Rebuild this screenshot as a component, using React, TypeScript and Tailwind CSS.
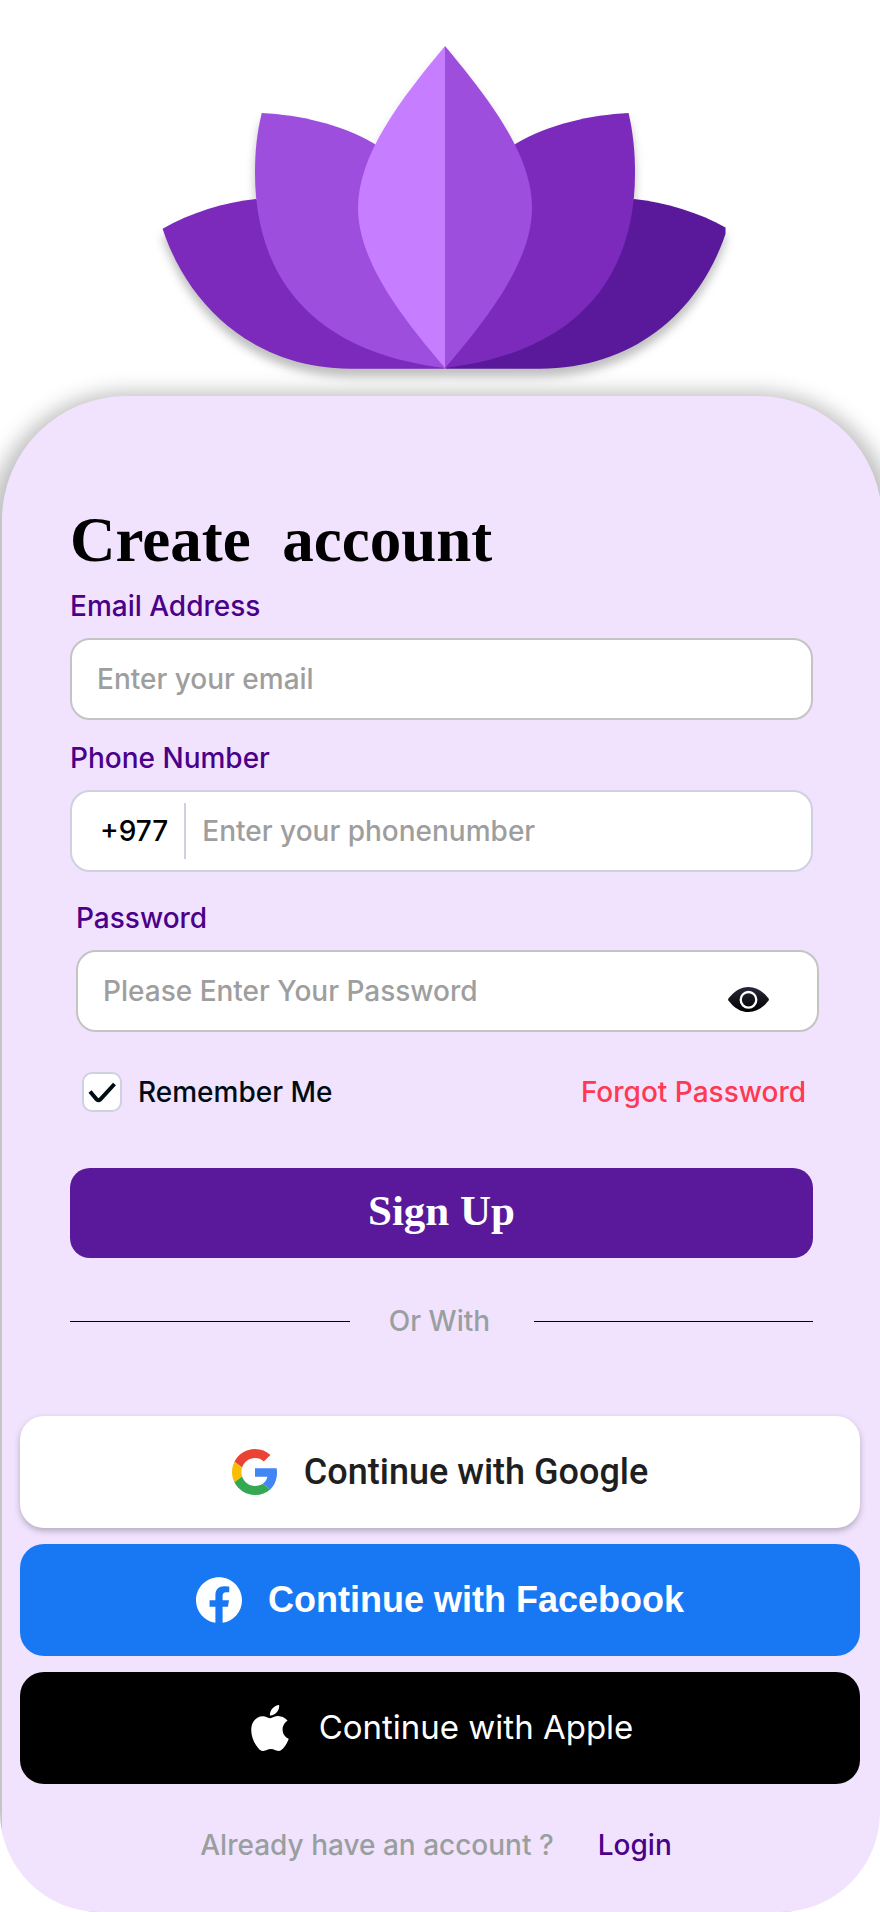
import { useState } from "react";
import type { ReactNode } from "react";

const sans = "font-['Inter','Liberation_Sans',sans-serif]";
const labelText = "text-[28px] leading-10 font-medium";
const fieldBox = "flex h-[82px] items-center rounded-[20px] border-2 bg-white";
const fieldInput =
  "h-full min-w-0 flex-1 bg-transparent text-[28px] font-medium text-black outline-none placeholder:text-[#9e9e9e]";

function Lotus() {
  return (
    <svg
      viewBox="162 46 564 324"
      className="h-auto w-[564px] overflow-visible drop-shadow-[0_8px_5px_rgba(0,0,0,0.25)]"
      role="img"
      aria-label="Lotus"
    >
      <path
        fill="#7b2abc"
        d="M162.6 228.7C190 213 225 202 256 199L330 260L445 368.7H350C260 368.7 190 312 162.6 228.7Z"
      />
      <path
        fill="#5a189a"
        d="M725.5 227.5C700 213 665 202 634 199L560 260L445 368.7H540C630 368.7 698 315 725.5 234Z"
      />
      <path
        fill="#9d4edd"
        d="M261.7 113C300 115 340 124 373 143L445 190V368C310 352 255 275 255 173C255 150 257 133 261.7 113Z"
      />
      <path
        fill="#7b2abc"
        d="M628.6 113C590 115 550 124 517 143L445 190V368C580 352 635 275 635 173C635 150 633 133 628.6 113Z"
      />
      <path fill="#c77dff" d="M445 46C400 100 358 155 358 208C358 262 404 320 445 368Z" />
      <path fill="#9d4edd" d="M445 46C490 100 532 155 532 208C532 262 486 320 445 368Z" />
    </svg>
  );
}

function EyeIcon() {
  return (
    <svg viewBox="0 0 41 25" className="h-[25px] w-[41px]" aria-hidden="true">
      <defs>
        <linearGradient id="eye-fill" x1="0" y1="0" x2="0" y2="1">
          <stop offset="0" stopColor="#292839" />
          <stop offset="1" stopColor="#000000" />
        </linearGradient>
      </defs>
      <path
        fill="url(#eye-fill)"
        d="M0.4 11.6C6 4.2 12.6 0 20.5 0S35 4.2 40.6 11.6Q41.2 12.5 40.6 13.4C35 20.8 28.4 25 20.5 25S6 20.8 0.4 13.4Q-0.2 12.5 0.4 11.6Z"
      />
      <circle cx="20.5" cy="12.8" r="7.8" fill="none" stroke="#fff" strokeWidth="2.3" />
    </svg>
  );
}

function GoogleIcon() {
  return (
    <svg viewBox="0 0 48 48" className="size-[46px]" aria-hidden="true">
      <path fill="#EA4335" d="M24 9.5c3.54 0 6.71 1.22 9.21 3.6l6.85-6.85C35.9 2.38 30.47 0 24 0 14.62 0 6.51 5.38 2.56 13.22l7.98 6.19C12.43 13.72 17.74 9.5 24 9.5z" />
      <path fill="#4285F4" d="M46.98 24.55c0-1.57-.15-3.09-.38-4.55H24v9.02h12.94c-.58 2.96-2.26 5.48-4.78 7.18l7.73 6c4.51-4.18 7.09-10.36 7.09-17.65z" />
      <path fill="#FBBC05" d="M10.53 28.59c-.48-1.45-.76-2.99-.76-4.59s.27-3.14.76-4.59l-7.98-6.19C.92 16.46 0 20.12 0 24c0 3.88.92 7.54 2.56 10.78l7.97-6.19z" />
      <path fill="#34A853" d="M24 48c6.48 0 11.93-2.13 15.89-5.81l-7.73-6c-2.15 1.45-4.92 2.3-8.16 2.3-6.26 0-11.57-4.22-13.47-9.91l-7.98 6.19C6.51 42.62 14.62 48 24 48z" />
    </svg>
  );
}

function FacebookIcon() {
  return (
    <svg viewBox="0 0 24 24" className="size-[46px]" fill="currentColor" aria-hidden="true">
      <path d="M24 12.073c0-6.627-5.373-12-12-12s-12 5.373-12 12c0 5.99 4.388 10.954 10.125 11.854v-8.385H7.078v-3.47h3.047V9.43c0-3.007 1.792-4.669 4.533-4.669 1.312 0 2.686.235 2.686.235v2.953H15.83c-1.491 0-1.956.925-1.956 1.874v2.25h3.328l-.532 3.47h-2.796v8.385C19.612 23.027 24 18.062 24 12.073z" />
    </svg>
  );
}

function AppleIcon() {
  return (
    <svg viewBox="0 0 24 24" className="size-[46px]" fill="currentColor" aria-hidden="true">
      <path d="M12.152 6.896c-.948 0-2.415-1.078-3.96-1.04-2.04.027-3.91 1.183-4.961 3.014-2.117 3.675-.546 9.103 1.519 12.09 1.013 1.454 2.208 3.09 3.792 3.039 1.52-.065 2.09-.987 3.935-.987 1.831 0 2.35.987 3.96.948 1.637-.026 2.676-1.48 3.676-2.948 1.156-1.688 1.636-3.325 1.662-3.415-.039-.013-3.182-1.221-3.22-4.857-.026-3.04 2.48-4.494 2.597-4.559-1.429-2.09-3.623-2.324-4.39-2.376-2-.156-3.675 1.09-4.61 1.09zM15.53 3.83c.843-1.012 1.4-2.427 1.245-3.83-1.207.052-2.662.805-3.532 1.818-.78.896-1.454 2.338-1.273 3.714 1.338.104 2.715-.688 3.559-1.701" />
    </svg>
  );
}

function SocialButton({ icon, className, children }: { icon: ReactNode; className: string; children: ReactNode }) {
  return (
    <button
      type="button"
      className={`flex h-28 w-full cursor-pointer items-center justify-center gap-[26px] rounded-3xl ${className}`}
    >
      {icon}
      <span>{children}</span>
    </button>
  );
}

export default function App() {
  const [showPassword, setShowPassword] = useState(false);

  return (
    <main className={`min-h-screen overflow-hidden rounded-b-[100px] bg-white ${sans}`}>
      <header className="flex justify-center pt-[46px] pb-[26px] pl-2">
        <Lotus />
      </header>

      <section className="-mr-0.5 ml-0.5 rounded-t-[124px] bg-[#f1e3fe] pt-[106px] pb-[47px] shadow-[0_10px_20px_14px_rgba(0,0,0,0.25)]">
        <form className="pr-[69px] pl-[68px]" onSubmit={(e) => e.preventDefault()}>
          <h1 className="mb-2 font-['Liberation_Serif',serif] text-[63px] leading-[76px] font-bold whitespace-pre text-black">
            {"Create  account"}
          </h1>

          <label htmlFor="email" className={`block text-[#4b0089] ${labelText}`}>
            Email Address
          </label>
          <div className={`mt-3 border-[#c4c4c4] px-[25px] ${fieldBox}`}>
            <input id="email" type="email" placeholder="Enter your email" className={fieldInput} />
          </div>

          <label htmlFor="phone" className={`mt-[18px] block text-[#4b0089] ${labelText}`}>
            Phone Number
          </label>
          <div className={`mt-3 border-[#cdd1e0] pr-[25px] pl-7 ${fieldBox}`}>
            <span className="text-[28px] font-medium text-black">+977</span>
            <span className="mx-4 h-14 w-0.5 bg-[#cdd1e0]" />
            <input id="phone" type="tel" placeholder="Enter your phonenumber" className={fieldInput} />
          </div>

          <div className="-mr-1.5 ml-1.5">
            <label htmlFor="password" className={`mt-[26px] block text-[#4b0089] ${labelText}`}>
              Password
            </label>
            <div className={`mt-3 border-[#c4c4c4] pr-12 pl-[25px] ${fieldBox}`}>
              <input
                id="password"
                type={showPassword ? "text" : "password"}
                placeholder="Please Enter Your Password"
                className={fieldInput}
              />
              <button
                type="button"
                aria-label="Show password"
                className="cursor-pointer self-end pb-[18px]"
                onClick={() => setShowPassword(!showPassword)}
              >
                <EyeIcon />
              </button>
            </div>

            <div className="mt-10 flex items-center justify-between pr-[13px] pl-1.5">
              <label className={`flex items-center gap-4 text-[#000c14] ${labelText}`}>
                <span className="grid size-10">
                  <input
                    type="checkbox"
                    defaultChecked
                    className="peer col-start-1 row-start-1 size-10 cursor-pointer appearance-none rounded-[10px] border-2 border-[#cdd1e0] bg-white"
                  />
                  <svg
                    viewBox="0 0 40 40"
                    className="pointer-events-none invisible col-start-1 row-start-1 size-10 peer-checked:visible"
                    aria-hidden="true"
                  >
                    <path d="M8 19.5L14.8 27.5Q16.5 29 18.2 27.5L32.5 12" fill="none" stroke="#000c14" strokeWidth="4" />
                  </svg>
                </span>
                Remember Me
              </label>
              <a href="#forgot" className={`text-[#ff3951] ${labelText}`}>
                Forgot Password
              </a>
            </div>
          </div>

          <button
            type="submit"
            className="mt-14 h-[90px] w-full cursor-pointer rounded-[20px] bg-[#5a189a] pb-1 font-['Liberation_Serif',serif] text-[43px] font-bold text-white"
          >
            Sign Up
          </button>

          <div className="mt-[43px] flex items-center">
            <span className="h-px flex-1 bg-black" />
            <span className={`w-[184px] pr-1 text-center text-[#999f9f] ${labelText}`}>Or With</span>
            <span className="h-px flex-1 bg-black" />
          </div>
        </form>

        <div className="mt-[75px] flex flex-col gap-4 pr-[22px] pl-[18px]">
          <SocialButton
            icon={<GoogleIcon />}
            className="bg-white font-['Roboto',sans-serif] text-[36px] font-medium text-[#1f1f1f] shadow-[0_3px_6px_rgba(0,0,0,0.25)]"
          >
            Continue with Google
          </SocialButton>
          <SocialButton
            icon={<FacebookIcon />}
            className="bg-[#1877f2] font-['Liberation_Sans',sans-serif] text-[36px] font-bold text-white"
          >
            Continue with Facebook
          </SocialButton>
          <SocialButton icon={<AppleIcon />} className="bg-black text-[33px] font-normal text-white">
            Continue with Apple
          </SocialButton>
        </div>

        <p className={`mt-[41px] flex justify-center gap-11 pr-3 text-[#999f9f] ${labelText}`}>
          <span>Already have an account ?</span>
          <a href="#login" className="text-[#4b0089]">
            Login
          </a>
        </p>
      </section>
    </main>
  );
}
